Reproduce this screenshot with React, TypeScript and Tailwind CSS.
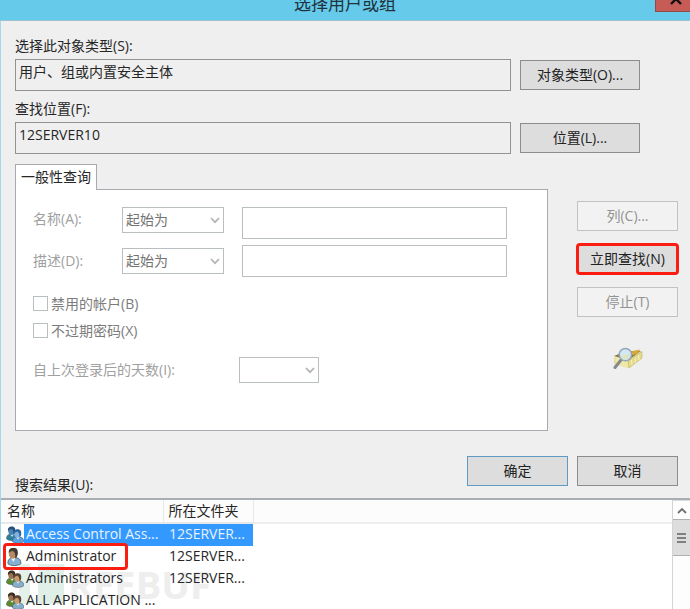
import React from 'react';

function Chevron({ className = '', up = false }: { className?: string; up?: boolean }) {
  return (
    <svg className={className} width="10" height="7" viewBox="0 0 10 7" fill="none" aria-hidden="true">
      <path d={up ? 'M1 6 L5 2 L9 6' : 'M1 1 L5 5.2 L9 1'} stroke={up ? '#707070' : '#b4b4b4'} strokeWidth="1.8" />
    </svg>
  );
}

function PushButton({ children, className = '', disabled = false }: { children: React.ReactNode; className?: string; disabled?: boolean }) {
  return (
    <button
      type="button"
      disabled={disabled}
      className={`h-[30px] shrink-0 border text-center leading-5 ${
        disabled ? 'border-[#bfc3c6] bg-[#f2f2f2] text-[#939393]' : 'bg-[#dddddd] text-[#222]'
      } ${className}`}
    >
      {children}
    </button>
  );
}

function ReadonlyRow({ id, label, value, button }: { id: string; label: string; value: string; button: string }) {
  return (
    <div>
      <label htmlFor={id} className="block h-[23px] leading-5">
        {label}
      </label>
      <div className="flex items-center gap-[9px]">
        <input id={id} readOnly value={value} className="h-8 min-w-0 flex-1 border border-[#929295] bg-[#efefef] px-[3px] pb-2 outline-none" />
        <PushButton className="w-[120px] border-[#8c8c8c]">{button}</PushButton>
      </div>
    </div>
  );
}

function Dropdown({ id, value, className = '' }: { id: string; value?: string; className?: string }) {
  return (
    <span className={`relative block shrink-0 ${className}`}>
      <select id={id} disabled className="h-[26px] w-full appearance-none border border-[#b9bec0] bg-white px-[3px] leading-5 text-[#737373] opacity-100">
        {value ? <option>{value}</option> : <option aria-label="-" />}
      </select>
      <Chevron className="pointer-events-none absolute right-1 top-[10px]" />
    </span>
  );
}

function Person({ x, y, shirt, hair, skin }: { x: number; y: number; shirt: string; hair: string; skin: string }) {
  return (
    <g transform={`translate(${x} ${y})`}>
      <path d="M0.3 12.4 C0 9 2 7.6 4.4 7.4 L7 7.4 C10.2 7.7 11.9 9.6 11.6 12.4 C8.5 14.6 3 14.6 0.3 12.4Z" fill={shirt} stroke="#3f4f5a" strokeWidth="0.5" />
      <path d="M3.8 7.3 L5.8 10.4 L7.6 7.3Z" fill="#dfe9ee" />
      <ellipse cx="5.2" cy="4.4" rx="3.2" ry="4" fill={skin} />
      <path d="M1.8 4.6 C1 1.3 3 -0.2 5.4 -0.2 C8.6 -0.2 9.6 2 8.9 5.6 C8.5 7 7.8 7.6 7.2 7.9 C7.4 5.4 6.9 3.2 5.2 2.4 C3.6 2.6 2.4 3.4 1.8 4.6Z" fill={hair} />
    </g>
  );
}

function GroupIcon({ selected = false }: { selected?: boolean }) {
  return (
    <svg width="18" height="18" viewBox="0 0 18 18" className="block" aria-hidden="true">
      <Person x={0.3} y={0.6} shirt={selected ? '#2b7f9c' : '#5c8a2c'} hair={selected ? '#23507c' : '#3d2f24'} skin={selected ? '#4a83b5' : '#9c7350'} />
      <Person x={6.2} y={3.4} shirt={selected ? '#5aa0dc' : '#86aecb'} hair={selected ? '#2f679c' : '#5a4433'} skin={selected ? '#7fb2e2' : '#c99a6e'} />
    </svg>
  );
}

function UserIcon() {
  return (
    <svg width="18" height="18" viewBox="0 0 18 18" className="block" aria-hidden="true">
      <path d="M2 15.8 C1.4 11.5 4 10 7 9.7 L10 9.7 C13.4 10 15.3 12.4 14.8 15.8 C11.5 18.2 5 18.2 2 15.8Z" fill="#86b0cf" stroke="#3f5260" strokeWidth="0.8" />
      <path d="M4.6 9.6 L7.5 14 L9.6 9.6Z" fill="#eef4f7" />
      <ellipse cx="6.8" cy="5.8" rx="4" ry="5" fill="#b88a66" />
      <path d="M2.8 5 C2.2 1.4 4.6 -0.2 7.4 -0.2 C11.4 -0.2 12.4 2.8 11.6 6.8 C11.2 8.8 10.4 9.8 9.2 10.2 C9.6 6.2 8.8 3.8 6.8 3 C5 3.2 3.6 3.8 2.8 5Z" fill="#443930" />
    </svg>
  );
}

function SearchIcon() {
  return (
    <svg width="30" height="24" viewBox="0 0 30 24" aria-hidden="true">
      <path d="M1 10 L14 14 L15 21 L1 17Z" fill="#e8e09a" />
      <path d="M1 9 L13 4 L28 4 L15 13.5Z" fill="#8d7a3a" />
      <path d="M15 5 L27 2.6 L25 6.5 L17 9Z" fill="#d9a63a" />
      <path d="M3 11 L15 14 L29 4.6 L29 11 L16 21 L3 17Z" fill="#efe9a8" />
      <path d="M15 14 L29 4.6 L29 11 L16 21Z" fill="#e3db8c" stroke="#bdb25e" strokeWidth="0.6" />
      <path d="M18.5 13 L19 18 M22 10.5 L22.5 15.5 M25.5 8 L26 13" stroke="#f7f3c4" strokeWidth="1" />
      <path d="M8 13 L2 20.5" stroke="#85898f" strokeWidth="3" strokeLinecap="round" />
      <circle cx="12.4" cy="7.6" r="6.2" fill="#d3e8f6" stroke="#93a5b6" strokeWidth="1.5" />
      <path d="M7.5 9 L17 6.5 C17.5 11 13.5 13.3 9.4 12Z" fill="#dfe3b4" opacity="0.8" />
    </svg>
  );
}

const results = [
  { name: 'Access Control Ass...', folder: '12SERVER...', kind: 'group', selected: true },
  { name: 'Administrator', folder: '12SERVER...', kind: 'user', marked: true },
  { name: 'Administrators', folder: '12SERVER...', kind: 'group' },
  { name: 'ALL APPLICATION ...', folder: '', kind: 'group' },
];

function Results() {
  return (
    <div className="flex h-[111px] overflow-hidden border-t-2 border-[#a9adb4] bg-white">
      <div className="relative min-w-0 flex-1">
        <div className="absolute left-[18px] top-[64px] flex items-center gap-1 select-none" aria-hidden="true">
          <span className="flex h-10 gap-2">
            <span className="w-[11px] bg-[#e4f1ea]" />
            <span className="w-[26px] bg-[#e0efe7]" />
          </span>
          <span className="text-[38px] font-bold leading-10 text-[#eeeeee]">REEBUF</span>
        </div>
        <table className="relative w-full table-fixed border-collapse text-left">
          <colgroup>
            <col className="w-[162px]" />
            <col className="w-[90px]" />
            <col />
          </colgroup>
          <thead>
            <tr className="h-[23px] bg-[#fcfcfc]">
              <th className="border-b-2 border-r border-[#e8e8e8] p-0 pl-[6px] font-normal leading-5">名称</th>
              <th className="border-b-2 border-r border-[#e8e8e8] p-0 pl-[5px] font-normal leading-5">所在文件夹</th>
              <td className="border-b-2 border-[#eeeeee] p-0" />
            </tr>
          </thead>
          <tbody>
            {results.map((r) => (
              <tr key={r.name} className="h-[22px]">
                <td className="p-0">
                  <div className="relative flex h-[22px] items-center pl-[5px]">
                    {r.kind === 'user' ? <UserIcon /> : <GroupIcon selected={r.selected} />}
                    <span className={`h-full flex-1 whitespace-nowrap pl-[2px] leading-5 ${r.selected ? 'bg-[#3399ff] text-[#e8f3ff]' : ''}`}>{r.name}</span>
                    {r.marked && <span className="absolute -top-[3px] left-[2px] h-[27px] w-[125px] rounded-[4px] border-[3px] border-[#fb1c12]" />}
                  </div>
                </td>
                <td className={`p-0 ${r.selected ? 'bg-[#3399ff] text-[#e8f3ff]' : ''}`}>
                  <div className="h-[22px] whitespace-nowrap pl-[6px] leading-5">{r.folder}</div>
                </td>
                <td className="p-0" />
              </tr>
            ))}
          </tbody>
        </table>
      </div>
      <div className="flex w-[18px] shrink-0 flex-col border-l border-[#d4d4d4] bg-[#fdfdfd]">
        <button type="button" aria-label="向上滚动" className="flex h-[19px] items-center justify-center border-t border-[#dcdcdc]">
          <Chevron up />
        </button>
        <div className="flex h-[37px] flex-col items-center justify-center gap-[2px] border-y border-[#b0b0b0] bg-[#dddddd]">
          <span className="h-[2px] w-[9px] bg-[#808080]" />
          <span className="h-[2px] w-[9px] bg-[#808080]" />
          <span className="h-[2px] w-[9px] bg-[#808080]" />
        </div>
      </div>
    </div>
  );
}

export default function App() {
  return (
    <div className="overflow-hidden bg-[#efefef] font-['Open_Sans','Noto_Sans_CJK_SC',sans-serif] text-[14px] text-[#262626]">
      <header className="relative flex h-[21px] items-end justify-center overflow-hidden border-b border-[#9cc4d4] bg-[#66caea] pb-1.5">
        <h1 className="text-[17px] leading-5 text-[#20333c]">选择用户或组</h1>
        <button type="button" aria-label="关闭" className="absolute right-0 top-0 flex h-3 w-[35px] items-start justify-center border-b border-l border-[#8f4a48] bg-[#c75b55] pl-1.5">
          <svg width="12" height="6" viewBox="0 0 12 6" aria-hidden="true">
            <path d="M2 -5 L11 4 M10 -5 L1 4" stroke="#111" strokeWidth="2.4" />
          </svg>
        </button>
      </header>

      <main className="border-l border-[#a5d8ea]">
        <div className="flex flex-col gap-2 pl-[14px] pr-[50px] pt-[15px]">
          <ReadonlyRow id="types" label="选择此对象类型(S):" value="用户、组或内置安全主体" button="对象类型(O)..." />
          <ReadonlyRow id="place" label="查找位置(F):" value="12SERVER10" button="位置(L)..." />
        </div>

        <div className="flex gap-[29px] pl-[14px] pr-3 pt-[10px]">
          <section className="min-w-0 flex-1">
            <div role="tablist" className="flex">
              <button type="button" role="tab" aria-selected="true" className="relative -mb-px h-[26px] w-[82px] border-x border-t border-[#a8aab0] bg-white pb-px leading-5">
                一般性查询
              </button>
            </div>
            <form className="h-[242px] border border-[#a8aab0] bg-white pl-[17px] pt-[17px] text-[#a0a0a0]">
              <div className="flex items-start">
                <label htmlFor="name-op" className="w-[89px] shrink-0 leading-6">名称(A):</label>
                <Dropdown id="name-op" value="起始为" className="w-[102px]" />
                <input aria-label="名称" disabled className="ml-[18px] mr-10 h-8 min-w-0 flex-1 border border-[#b9bec0] bg-white" />
              </div>
              <div className="mt-1.5 flex items-center">
                <label htmlFor="desc-op" className="w-[89px] shrink-0 leading-6">描述(D):</label>
                <Dropdown id="desc-op" value="起始为" className="w-[102px]" />
                <input aria-label="描述" disabled className="ml-[18px] mr-10 h-8 min-w-0 flex-1 border border-[#b9bec0] bg-white" />
              </div>
              <div className="mt-[13px] flex flex-col text-[#7c7c7c]">
                <label className="flex h-[27px] items-center gap-[3px]">
                  <input type="checkbox" disabled className="size-[15px] appearance-none border border-[#b9bec0] bg-white" />
                  禁用的帐户(B)
                </label>
                <label className="flex h-[27px] items-center gap-[3px]">
                  <input type="checkbox" disabled className="size-[15px] appearance-none border border-[#b9bec0] bg-white" />
                  不过期密码(X)
                </label>
              </div>
              <div className="mt-[13px] flex items-center">
                <label htmlFor="days" className="w-[206px] shrink-0 leading-6">自上次登录后的天数(I):</label>
                <Dropdown id="days" className="w-20" />
              </div>
            </form>
          </section>
          <div className="flex w-[101px] shrink-0 flex-col gap-[13px] pt-[37px]">
            <PushButton disabled>列(C)...</PushButton>
            <PushButton className="rounded-[3px] border-2 border-[#fb1c12] ring-1 ring-[#fb1c12]">立即查找(N)</PushButton>
            <PushButton disabled>停止(T)</PushButton>
            <div className="flex justify-center pt-[17px]">
              <SearchIcon />
            </div>
          </div>
        </div>

        <div className="flex h-[67px] items-start justify-end gap-[9px] pl-[14px] pr-3 pt-[25px]">
          <h2 className="mr-auto self-end pb-[3px] leading-5">搜索结果(U):</h2>
          <PushButton className="w-[101px] border-[#5f9ac4]">确定</PushButton>
          <PushButton className="w-[101px] border-[#8c8c8c]">取消</PushButton>
        </div>
        <Results />
      </main>
    </div>
  );
}
